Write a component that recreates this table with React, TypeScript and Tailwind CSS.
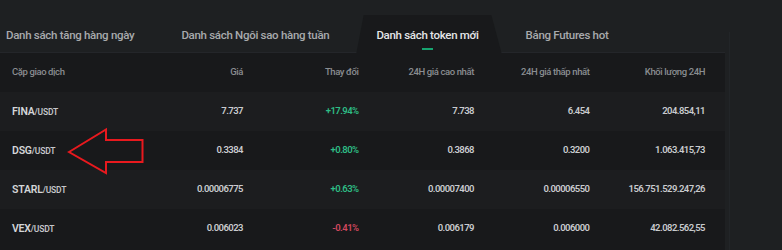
import React from "react";

const rows = [
  { base: "FINA", price: "7.737", change: "+17.94%", up: true, high: "7.738", low: "6.454", vol: "204.854,11" },
  { base: "DSG", price: "0.3384", change: "+0.80%", up: true, high: "0.3868", low: "0.3200", vol: "1.063.415,73" },
  { base: "STARL", price: "0.00006775", change: "+0.63%", up: true, high: "0.00007400", low: "0.00006550", vol: "156.751.529.247,26" },
  { base: "VEX", price: "0.006023", change: "-0.41%", up: false, high: "0.006179", low: "0.006000", vol: "42.082.562,55" },
];

const tabs = ["Danh sách tăng hàng ngày", "Danh sách Ngôi sao hàng tuần", "Danh sách token mới", "Bảng Futures hot"];

export default function App() {
  return (
    <div
      className="relative w-[782px] h-[250px] overflow-hidden bg-[#1e2022] flex"
      style={{ fontFamily: "Roboto, 'Noto Sans', sans-serif" }}
    >
      <div className="w-[725px] flex flex-col">
        {/* tabs */}
        <div className="h-[53px] flex items-end border-b border-[#24262a] pl-[6px] gap-[47px]">
          {tabs.map((t, i) => {
            const active = i === 2;
            return (
              <div key={t} className="relative h-[37px] flex flex-col items-center">
                {active && (
                  <div className="absolute top-0 bottom-[-1px] left-[-20px] right-[-23px] bg-[#18191b] [clip-path:polygon(5%_0,93%_0,100%_100%,0_100%)]" />
                )}
                <span
                  className={
                    "relative mt-[12px] text-[11.5px] tracking-[-0.3px] leading-[16px] font-medium whitespace-nowrap " +
                    (active ? "text-[#e4e6e8]" : "text-[#a8aaad]")
                  }
                >
                  {t}
                </span>
                {active && <div className="relative mt-[5px] w-[11px] h-[2px] bg-[#17a470]" />}
              </div>
            );
          })}
        </div>
        {/* table */}
        <div className="flex-1 bg-[#18191b]">
          <div className="grid grid-cols-6 h-[39px] items-center pl-[12px] pr-[20px] text-[9.5px] tracking-[-0.4px] font-medium text-[#8a8d91]">
            <div>Cặp giao dịch</div>
            <div className="text-right">Giá</div>
            <div className="text-right">Thay đổi</div>
            <div className="text-right">24H giá cao nhất</div>
            <div className="text-right">24H giá thấp nhất</div>
            <div className="text-right">Khối lượng 24H</div>
          </div>
          {rows.map((r, i) => (
            <div
              key={r.base}
              className={
                "grid grid-cols-6 h-[39px] items-center pl-[12px] pr-[20px] text-[9.5px] tracking-[-0.55px] font-semibold text-[#c9cbce] " +
                (i % 2 === 0 ? "bg-[#1c1d1f]" : "bg-[#18191b]")
              }
            >
              <div className="whitespace-nowrap">
                <span className="text-[10.5px] tracking-[-0.2px] font-semibold text-[#d4d6d8]">{r.base}</span>
                <span className="text-[8.5px] tracking-[-0.2px] text-[#c4c6c9]">/USDT</span>
              </div>
              <div className="text-right">{r.price}</div>
              <div className={"text-right " + (r.up ? "text-[#2ebd85]" : "text-[#d0485e]")}>{r.change}</div>
              <div className="text-right">{r.high}</div>
              <div className="text-right">{r.low}</div>
              <div className="text-right">{r.vol}</div>
            </div>
          ))}
        </div>
      </div>
      <div className="flex-1 pt-[32px] pl-[4px]">
        <div className="h-full border-l border-[#222528]" />
      </div>
      {/* annotation arrow */}
      <svg className="absolute left-0 top-0 pointer-events-none" width="782" height="250">
        <polygon
          points="69,152 106,129.5 106,140 142.5,140 142.5,162 106,162 106,173"
          fill="none"
          stroke="#e8191e"
          strokeWidth="2"
          strokeLinejoin="miter"
        />
      </svg>
    </div>
  );
}
